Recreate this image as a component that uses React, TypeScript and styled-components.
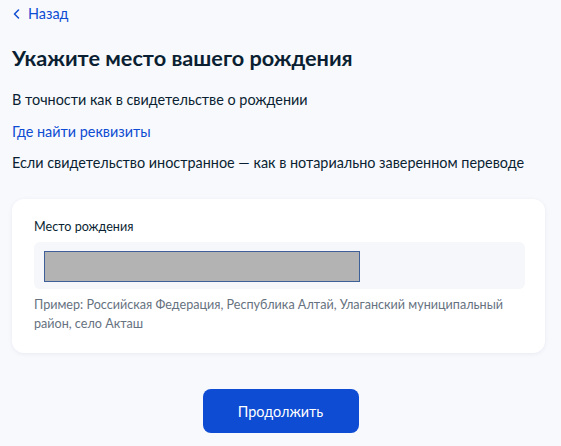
import React from "react";
import styled, { createGlobalStyle } from "styled-components";

const Global = createGlobalStyle`
  html, body { margin: 0; padding: 0; background: #f8f9fc; }
  body { font-family: Lato, "Noto Sans", sans-serif; color: #0b1f33; }
  * { box-sizing: border-box; }
`;

const Page = styled.div`
  width: 561px;
  min-height: 446px;
  padding: 5px 12px 12px 12px;
  display: flex;
  flex-direction: column;
`;

const BackLink = styled.a`
  display: flex;
  align-items: center;
  gap: 8px;
  height: 18px;
  font-size: 14.4px;
  line-height: 18px;
  color: #0d4cd3;
  text-decoration: none;
  cursor: pointer;
  padding-left: 1px;
`;

const Title = styled.h1`
  margin: 21px 0 0 0;
  font-size: 21.7px;
  line-height: 28px;
  font-weight: 700;
  color: #0b1f33;
`;

const Text = styled.p<{ $top: number }>`
  margin: ${(p) => p.$top}px 0 0 0;
  font-size: 14.4px;
  line-height: 20px;
  color: #0b1f33;
`;

const Link = styled.a<{ $top: number }>`
  display: block;
  margin-top: ${(p) => p.$top}px;
  font-size: 14.4px;
  line-height: 20px;
  color: #0d4cd3;
  text-decoration: none;
  cursor: pointer;
`;

const Card = styled.section`
  margin-top: 26px;
  width: 533px;
  background: #ffffff;
  border-radius: 12px;
  box-shadow: 0 1px 4px rgba(40, 70, 150, 0.08);
  padding: 19px 20px 20px 22px;
  display: flex;
  flex-direction: column;
`;

const Label = styled.label`
  font-size: 12.6px;
  line-height: 18px;
  color: #0b1f33;
`;

const InputBox = styled.div`
  margin-top: 6px;
  height: 47px;
  background: #f5f7fa;
  border-radius: 6px;
  padding: 9px 10px;
  display: flex;
  align-items: flex-start;
`;

const Redacted = styled.div`
  width: 316px;
  height: 31px;
  background: #b3b3b3;
  border: 1px solid #3f5f99;
`;

const Hint = styled.p`
  margin: 6px 0 0 0;
  font-size: 12.6px;
  line-height: 19px;
  color: #66727f;
`;

const Actions = styled.div`
  margin-top: 36px;
  display: flex;
  justify-content: center;
`;

const Button = styled.button`
  width: 156px;
  height: 44px;
  border: none;
  border-radius: 8px;
  background: #0d4cd3;
  color: #ffffff;
  font-family: Lato, "Noto Sans", sans-serif;
  font-size: 14.4px;
  cursor: pointer;
`;

const Chevron = () => (
  <svg width="7" height="10" viewBox="0 0 7 10" fill="none">
    <path d="M5.5 1 L1.5 5 L5.5 9" stroke="#0d4cd3" strokeWidth="1.5" strokeLinecap="round" strokeLinejoin="round" />
  </svg>
);

export default function App() {
  return (
    <>
      <Global />
      <Page>
        <BackLink>
          <Chevron />
          Назад
        </BackLink>
        <Title>Укажите место вашего рождения</Title>
        <Text $top={18}>В точности как в свидетельстве о рождении</Text>
        <Link $top={12}>Где найти реквизиты</Link>
        <Text $top={11}>Если свидетельство иностранное — как в нотариально заверенном переводе</Text>
        <Card>
          <Label>Место рождения</Label>
          <InputBox>
            <Redacted />
          </InputBox>
          <Hint>
            Пример: Российская Федерация, Республика Алтай, Улаганский муниципальный район, село Акташ
          </Hint>
        </Card>
        <Actions>
          <Button>Продолжить</Button>
        </Actions>
      </Page>
    </>
  );
}
